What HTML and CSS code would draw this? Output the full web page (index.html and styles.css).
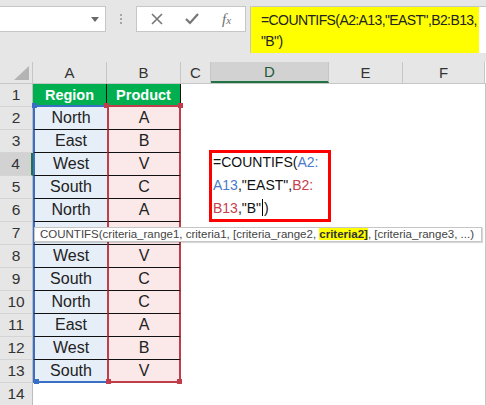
FILE: index.html
```html
<!DOCTYPE html>
<html lang="en">
<head>
    <meta charset="UTF-8">
    <meta name="viewport" content="width=device-width, initial-scale=1.0">
    <title>COUNTIFS</title>
    <link rel="stylesheet" href="styles.css">
</head>
<body>
    <!-- Barra de fórmulas -->
    <div class="toolbar">
        <div class="name-box"><span class="drop"></span></div>
        <div class="grip"><i></i><i></i><i></i></div>
        <div class="tools">
            <svg class="icon" width="12" height="12" viewBox="0 0 12 12"><path d="M1 1 L11 11 M11 1 L1 11" stroke="#767676" stroke-width="1.6" fill="none"/></svg>
            <svg class="icon" width="14" height="12" viewBox="0 0 14 12"><path d="M1 6 L5 10 L13 1" stroke="#767676" stroke-width="2.2" fill="none"/></svg>
            <span class="fx">f<small>x</small></span>
        </div>
        <div class="formula-input">
            <div class="formula">=COUNTIFS(A2:A13,"EAST",B2:B13,<br>"B")</div>
        </div>
    </div>

    <!-- Hoja -->
    <div class="sheet">
        <div class="row col-heads">
            <div class="cell w-h corner"><span class="tri"></span></div>
            <div class="cell w-a">A</div>
            <div class="cell w-b">B</div>
            <div class="cell w-c">C</div>
            <div class="cell w-d active">D</div>
            <div class="cell w-e">E</div>
            <div class="cell w-f">F</div>
            <div class="cell rest"></div>
        </div>

        <div class="row">
            <div class="cell w-h num">1</div>
            <div class="cell w-a head-a">Region<span class="sq sq-bl"></span></div>
            <div class="cell w-b head-b">Product<span class="sq sq-rl"></span><span class="sq sq-rr"></span></div>
            <div class="cell w-c"></div>
            <div class="cell w-d"></div>
            <div class="cell w-e"></div>
            <div class="cell w-f"></div>
            <div class="cell rest"></div>
        </div>

        <div class="row">
            <div class="cell w-h num">2</div>
            <div class="cell w-a reg">North</div>
            <div class="cell w-b prod">A</div>
            <div class="cell w-c"></div><div class="cell w-d"></div><div class="cell w-e"></div><div class="cell w-f"></div><div class="cell rest"></div>
        </div>
        <div class="row">
            <div class="cell w-h num">3</div>
            <div class="cell w-a reg">East</div>
            <div class="cell w-b prod">B</div>
            <div class="cell w-c"></div><div class="cell w-d"></div><div class="cell w-e"></div><div class="cell w-f"></div><div class="cell rest"></div>
        </div>
        <div class="row">
            <div class="cell w-h num sel">4</div>
            <div class="cell w-a reg">West</div>
            <div class="cell w-b prod">V</div>
            <div class="cell w-c"></div>
            <div class="cell w-d edit-cell">
                <div class="editor">
                    <div class="editor-text">=COUNTIFS(<span class="ref-a">A2:</span><br><span class="ref-a">A13</span>,"EAST",<span class="ref-b">B2:</span><br><span class="ref-b">B13</span>,"B"<span class="caret"></span>)</div>
                </div>
            </div>
            <div class="cell w-e"></div><div class="cell w-f"></div><div class="cell rest"></div>
        </div>
        <div class="row">
            <div class="cell w-h num">5</div>
            <div class="cell w-a reg">South</div>
            <div class="cell w-b prod">C</div>
            <div class="cell w-c"></div><div class="cell w-d"></div><div class="cell w-e"></div><div class="cell w-f"></div><div class="cell rest"></div>
        </div>
        <div class="row">
            <div class="cell w-h num">6</div>
            <div class="cell w-a reg">North</div>
            <div class="cell w-b prod">A</div>
            <div class="cell w-c"></div><div class="cell w-d"></div><div class="cell w-e"></div><div class="cell w-f"></div><div class="cell rest"></div>
        </div>
        <div class="row tip-row">
            <div class="cell w-h num">7</div>
            <div class="cell w-a reg"></div>
            <div class="cell w-b prod"></div>
            <div class="cell w-c"></div><div class="cell w-d"></div><div class="cell w-e"></div><div class="cell w-f"></div><div class="cell rest"></div>
            <!-- Ayuda de argumentos -->
            <div class="tooltip">COUNTIFS(criteria_range1, criteria1, [criteria_range2, <b>criteria2]</b>, [criteria_range3, ...)</div>
        </div>
        <div class="row">
            <div class="cell w-h num">8</div>
            <div class="cell w-a reg">West</div>
            <div class="cell w-b prod">V</div>
            <div class="cell w-c"></div><div class="cell w-d"></div><div class="cell w-e"></div><div class="cell w-f"></div><div class="cell rest"></div>
        </div>
        <div class="row">
            <div class="cell w-h num">9</div>
            <div class="cell w-a reg">South</div>
            <div class="cell w-b prod">C</div>
            <div class="cell w-c"></div><div class="cell w-d"></div><div class="cell w-e"></div><div class="cell w-f"></div><div class="cell rest"></div>
        </div>
        <div class="row">
            <div class="cell w-h num">10</div>
            <div class="cell w-a reg">North</div>
            <div class="cell w-b prod">C</div>
            <div class="cell w-c"></div><div class="cell w-d"></div><div class="cell w-e"></div><div class="cell w-f"></div><div class="cell rest"></div>
        </div>
        <div class="row">
            <div class="cell w-h num">11</div>
            <div class="cell w-a reg">East</div>
            <div class="cell w-b prod">A</div>
            <div class="cell w-c"></div><div class="cell w-d"></div><div class="cell w-e"></div><div class="cell w-f"></div><div class="cell rest"></div>
        </div>
        <div class="row">
            <div class="cell w-h num">12</div>
            <div class="cell w-a reg">West</div>
            <div class="cell w-b prod">B</div>
            <div class="cell w-c"></div><div class="cell w-d"></div><div class="cell w-e"></div><div class="cell w-f"></div><div class="cell rest"></div>
        </div>
        <div class="row">
            <div class="cell w-h num">13</div>
            <div class="cell w-a reg last">South<span class="sq sq-bl-b"></span></div>
            <div class="cell w-b prod last">V<span class="sq sq-rl-b"></span><span class="sq sq-rr-b"></span></div>
            <div class="cell w-c"></div><div class="cell w-d"></div><div class="cell w-e"></div><div class="cell w-f"></div><div class="cell rest"></div>
        </div>
        <div class="row">
            <div class="cell w-h num">14</div>
            <div class="cell w-a"></div>
            <div class="cell w-b"></div>
            <div class="cell w-c"></div><div class="cell w-d"></div><div class="cell w-e"></div><div class="cell w-f"></div><div class="cell rest"></div>
        </div>
    </div>
</body>
</html>
```

FILE: styles.css
```css
* {
    box-sizing: border-box;
}

body {
    margin: 0;
    width: 486px;
    height: 405px;
    overflow: hidden;
    background: #fff;
    font-family: "Liberation Sans", Arial, sans-serif;
    color: #222;
}

/* Barra de fórmulas */
.toolbar {
    display: flex;
    align-items: flex-start;
    height: 62px;
    padding-top: 6px;
    background: #e6e6e6;
}

.name-box {
    display: flex;
    align-items: center;
    justify-content: flex-end;
    width: 106px;
    height: 26px;
    padding-right: 6px;
    background: #fff;
    border: 1px solid #c6c6c6;
    border-left: none;
}

.name-box .drop {
    width: 0;
    height: 0;
    border-left: 4px solid transparent;
    border-right: 4px solid transparent;
    border-top: 5px solid #6a6a6a;
}

.grip {
    display: flex;
    flex-direction: column;
    align-items: center;
    justify-content: center;
    gap: 2px;
    width: 30px;
    height: 26px;
}

.grip i {
    display: block;
    width: 2px;
    height: 2px;
    background: #a6a6a6;
}

.tools {
    display: flex;
    align-items: center;
    gap: 22px;
    width: 110px;
    height: 26px;
    padding-left: 14px;
    background: #fff;
    border: 1px solid #c6c6c6;
}

.fx {
    font-family: "Liberation Serif", "Times New Roman", serif;
    font-style: italic;
    font-size: 15px;
    color: #6e6e6e;
    margin-left: 1px;
}

.fx small {
    font-size: 11px;
}

.formula-input {
    flex: 1;
    height: 47px;
    margin-left: 4px;
    background: #fff;
    border-top: 1px solid #c6c6c6;
    border-left: 1px solid #c6c6c6;
}

.formula {
    width: 228px;
    height: 46px;
    padding: 3px 0 0 10px;
    background: #ffff00;
    font-size: 14px;
    line-height: 21px;
    letter-spacing: -0.6px;
    color: #222;
}

/* Hoja */
.row {
    position: relative;
    display: flex;
    height: 23px;
}

.cell {
    position: relative;
    display: flex;
    align-items: center;
    justify-content: center;
    flex: none;
    height: 100%;
    font-size: 16px;
}

.w-h { width: 33px; }
.w-a { width: 74px; }
.w-b { width: 74px; }
.w-c { width: 30px; }
.w-d { width: 118px; }
.w-e { width: 74px; }
.w-f { width: 82px; }

.rest {
    flex: 1;
    border-left: 1px solid #c6c6c6;
}

.col-heads {
    height: 22px;
    background: #e6e6e6;
    border-bottom: 1px solid #c6c6c6;
}

.col-heads .cell {
    font-size: 15px;
    color: #333;
    border-right: 1px solid #c6c6c6;
}

.col-heads .rest {
    border: none;
    background: #fff;
}

.col-heads .active {
    background: #d2d2d2;
    border-bottom: 2px solid #217346;
    color: #1d5a38;
}

.corner {
    align-items: flex-end !important;
    justify-content: flex-end !important;
    padding: 0 3px 3px 0;
}

.corner .tri {
    width: 0;
    height: 0;
    border-left: 15px solid transparent;
    border-bottom: 14px solid #b4b4b4;
}

.num {
    font-size: 15.5px;
    color: #333;
    background: #e6e6e6;
    border-right: 1px solid #bdbdbd;
    border-bottom: 1px solid #d4d4d4;
}

.num.sel {
    background: #d2d2d2;
    border-right: 2px solid #217346;
}

/* Tabla de datos */
.head-a,
.head-b {
    background: #00b050;
    color: #fff;
    font-weight: bold;
    font-size: 14.5px;
    border-right: 1px solid #111;
}

.head-a {
    border-bottom: 2px solid #3a6fc6;
}

.head-b {
    border-bottom: 2px solid #c23d4b;
}

.reg {
    background: #e6eef8;
    border-left: 2px solid #3a6fc6;
    border-bottom: 1px solid #111;
}

.prod {
    background: #fbe9e9;
    border-left: 2px solid #c23d4b;
    border-right: 2px solid #c23d4b;
    border-bottom: 1px solid #111;
}

.reg.last {
    border-bottom: 2px solid #3a6fc6;
}

.prod.last {
    border-bottom: 2px solid #c23d4b;
}

/* Tiradores de rango */
.sq {
    position: absolute;
    width: 5px;
    height: 5px;
    z-index: 2;
}

.sq-bl, .sq-bl-b { background: #3a6fc6; left: -1px; }
.sq-rl, .sq-rr, .sq-rl-b, .sq-rr-b { background: #c23d4b; }
.sq-bl, .sq-rl, .sq-rr { bottom: -3px; }
.sq-bl-b, .sq-rl-b, .sq-rr-b { bottom: -3px; }
.sq-rl { left: -3px; }
.sq-rr { right: -3px; }
.sq-rl-b { left: -3px; }
.sq-rr-b { right: -3px; }

/* Edición en celda */
.editor {
    position: absolute;
    top: -3px;
    left: -2px;
    z-index: 3;
    width: 122px;
    height: 72px;
    padding-left: 1px;
    background: #fff;
    border: 3px solid #ff0000;
}

.editor-text {
    margin-top: -2px;
    font-size: 14px;
    line-height: 23px;
    color: #111;
    white-space: nowrap;
}

.ref-a { color: #4a7bc8; }
.ref-b { color: #c8404c; }

.caret {
    display: inline-block;
    width: 1px;
    height: 17px;
    margin: 0 1px;
    vertical-align: -3px;
    background: #000;
}

/* Ayuda de argumentos */
.tooltip {
    position: absolute;
    top: 5px;
    left: 34px;
    z-index: 4;
    width: 448px;
    height: 15px;
    padding-left: 5px;
    background: #fff;
    border: 1px solid #c6c6c6;
    box-shadow: 1px 1px 1px rgba(0, 0, 0, 0.15);
    font-size: 11.5px;
    line-height: 13px;
    color: #444;
    white-space: nowrap;
}

.tooltip b {
    background: #ffff00;
    color: #333;
}
```
